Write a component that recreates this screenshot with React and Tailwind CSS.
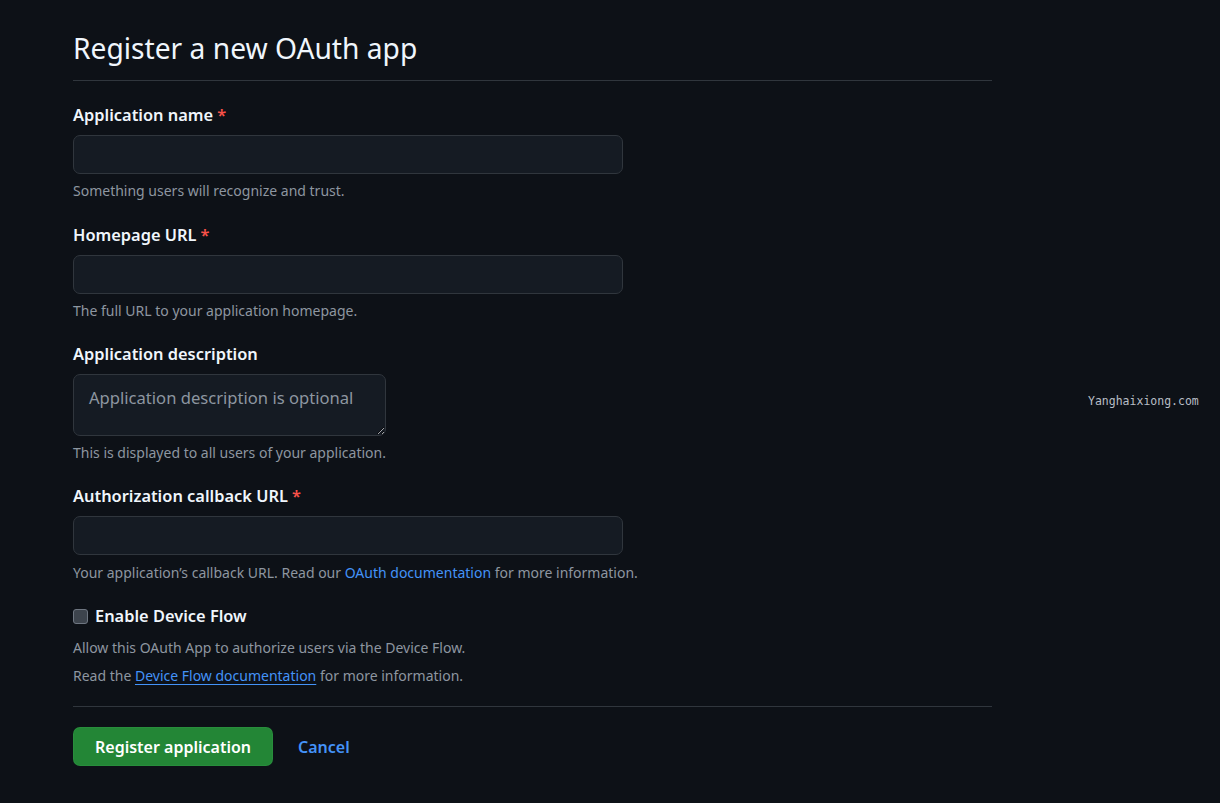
import { useState } from 'react'

const font = { fontFamily: '"Noto Sans", "Segoe UI", sans-serif' }

function Label({ children, required }) {
  return (
    <label className="block text-[16.4px] font-semibold leading-[24px] text-[#f0f6fc]">
      {children}
      {required && <span className="ml-1 text-[#f85149]">*</span>}
    </label>
  )
}

function Note({ children }) {
  return <p className="text-[14px] leading-[20px] text-[#8d96a0]">{children}</p>
}

function TextInput() {
  return (
    <input
      type="text"
      className="mt-[8px] block h-[39px] w-[550px] rounded-[7px] border border-[#30363d] bg-[#151b23] px-3 text-white outline-none"
    />
  )
}

function Field({ label, required, note, className }) {
  return (
    <div className={className}>
      <Label required={required}>{label}</Label>
      <TextInput />
      <div className="mt-[7px]">
        <Note>{note}</Note>
      </div>
    </div>
  )
}

export default function App() {
  const [deviceFlow, setDeviceFlow] = useState(false)

  return (
    <div className="relative min-h-[803px] w-full bg-[#0d1117]" style={font}>
      <div className="w-[919px] pl-[73px] pt-[28px] box-content">
        {/* Header */}
        <h1 className="border-b border-[#30363d] pb-[12px] text-[28.2px] font-normal leading-[40px] text-[#f0f6fc]">
          Register a new OAuth app
        </h1>

        <form className="pt-[22px]" onSubmit={(e) => e.preventDefault()}>
          <Field className="mb-[22px]" label="Application name" required note="Something users will recognize and trust." />
          <Field className="mb-[21px]" label="Homepage URL" required note="The full URL to your application homepage." />

          <div className="mb-[21px]">
            <Label>Application description</Label>
            <textarea
              placeholder="Application description is optional"
              className="mt-[8px] block h-[62px] w-[313px] resize rounded-[7px] border border-[#30363d] bg-[#151b23] py-[11px] pl-[15px] pr-[4px] text-[16.6px] leading-[24px] text-white outline-none placeholder:text-[#8d96a0]"
            />
            <div className="mt-[7px]">
              <Note>This is displayed to all users of your application.</Note>
            </div>
          </div>

          <div className="mb-[21px]">
            <Label required>Authorization callback URL</Label>
            <TextInput />
            <div className="mt-[8px]">
              <Note>
                Your application’s callback URL. Read our{' '}
                <a href="#" className="text-[#4493f8]">OAuth documentation</a> for more information.
              </Note>
            </div>
          </div>

          {/* Device flow */}
          <div className="border-b border-[#30363d] pb-[20px]">
            <label className="flex items-center gap-[7px]">
              <input
                type="checkbox"
                checked={deviceFlow}
                onChange={(e) => setDeviceFlow(e.target.checked)}
                className="h-[15px] w-[15px] appearance-none rounded-[3px] border border-[#6e7681] bg-[#3d444d]"
              />
              <span className="text-[16.4px] font-semibold leading-[24px] text-[#f0f6fc]">Enable Device Flow</span>
            </label>
            <div className="mt-[10px] space-y-[8px]">
              <Note>Allow this OAuth App to authorize users via the Device Flow.</Note>
              <Note>
                Read the{' '}
                <a href="#" className="text-[#4493f8] underline underline-offset-[3px]">Device Flow documentation</a>{' '}
                for more information.
              </Note>
            </div>
          </div>

          {/* Actions */}
          <div className="flex items-center gap-[25px] pt-[20px]">
            <button
              type="submit"
              className="h-[39px] w-[200px] rounded-[7px] border border-[#2f9a45]/40 bg-[#238636] text-[16px] font-semibold text-white"
            >
              Register application
            </button>
            <a href="#" className="text-[16px] font-semibold text-[#4493f8]">Cancel</a>
          </div>
        </form>
      </div>

      {/* Watermark */}
      <span
        className="absolute left-[1088px] top-[393px] text-[11.5px] text-[#b8bec6]"
        style={{ fontFamily: '"DejaVu Sans Mono", monospace' }}
      >
        Yanghaixiong.com
      </span>
    </div>
  )
}
